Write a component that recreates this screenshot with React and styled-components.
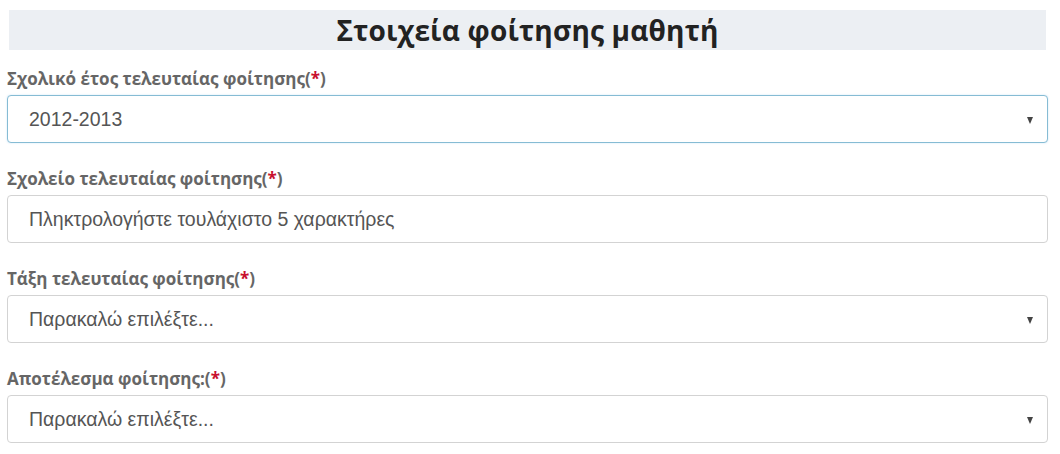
import React from "react";
import styled, { createGlobalStyle } from "styled-components";

const Global = createGlobalStyle`
  html, body { margin: 0; padding: 0; background: #fff; }
  body { font-family: "Open Sans", "Liberation Sans", sans-serif; }
`;

const Page = styled.div`
  width: 1041px;
  padding: 10px 0 0 7px;
`;

const Heading = styled.h2`
  margin: 0 2px 0 2px;
  height: 40px;
  background: #eceff3;
  display: flex;
  align-items: center;
  justify-content: center;
  font-family: "Open Sans", sans-serif;
  font-weight: 700;
  font-size: 28px;
  color: #222;
  letter-spacing: 0.2px;
`;

const Group = styled.div`
  display: flex;
  flex-direction: column;
  margin-top: ${(p) => (p.$first ? "18px" : "25px")};
`;

const Label = styled.label`
  font-family: "Open Sans", sans-serif;
  font-weight: 700;
  font-size: 17px;
  line-height: 22px;
  color: #666;
  margin-bottom: 5px;
`;

const Star = styled.span`
  color: #c8102e;
`;

const Field = styled.div`
  height: 46px;
  border: 1px solid ${(p) => (p.$focus ? "#86bcd4" : "#d3d3d3")};
  border-radius: 4px;
  box-shadow: ${(p) => (p.$focus ? "0 0 2px rgba(102,175,233,0.35)" : "none")};
  display: flex;
  align-items: center;
  padding: 0 14px 0 21px;
  font-family: "Liberation Sans", Arial, sans-serif;
  font-size: 19.5px;
  color: #555;
  background: #fff;
`;

const Value = styled.span`
  flex: 1;
`;

const Caret = styled.span`
  width: 0;
  height: 0;
  border-left: 3.5px solid transparent;
  border-right: 3.5px solid transparent;
  border-top: 7px solid #444;
  margin-top: 2px;
`;

function FormGroup({ label, value, select, focus, first }) {
  return (
    <Group $first={first}>
      <Label>
        {label}(<Star>*</Star>)
      </Label>
      <Field $focus={focus}>
        <Value>{value}</Value>
        {select && <Caret />}
      </Field>
    </Group>
  );
}

export default function App() {
  return (
    <>
      <Global />
      <Page>
        <Heading>Στοιχεία φοίτησης μαθητή</Heading>
        <FormGroup first label="Σχολικό έτος τελευταίας φοίτησης" value="2012-2013" select focus />
        <FormGroup label="Σχολείο τελευταίας φοίτησης" value="Πληκτρολογήστε τουλάχιστο 5 χαρακτήρες" />
        <FormGroup label="Τάξη τελευταίας φοίτησης" value="Παρακαλώ επιλέξτε..." select />
        <FormGroup label="Αποτέλεσμα φοίτησης:" value="Παρακαλώ επιλέξτε..." select />
      </Page>
    </>
  );
}
